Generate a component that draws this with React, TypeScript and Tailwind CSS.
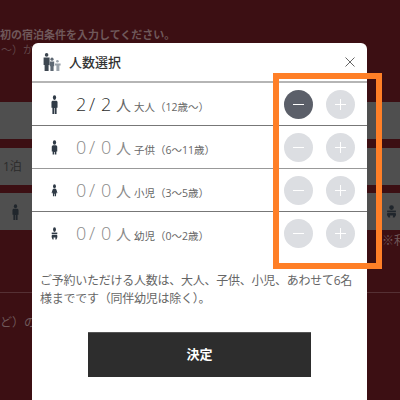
import React from "react";

const jp = "font-['Open_Sans','Noto_Sans_CJK_JP',sans-serif]";

const Adult = ({ className }: { className?: string }) => (
  <svg viewBox="0 0 12 22" className={className} fill="currentColor" preserveAspectRatio="none">
    <circle cx="6" cy="3" r="2.8" />
    <path d="M2.4 6.6h7.2l1.6 1.2v7H9.6V22H6.5v-7h-1v7H2.4v-7.2H.8v-7z" />
  </svg>
);

const Child = ({ className }: { className?: string }) => (
  <svg viewBox="0 0 12 18" className={className} fill="currentColor" preserveAspectRatio="none">
    <circle cx="6" cy="3" r="2.8" />
    <path d="M3 6.3h6l1.7 1.4v6H9.2v3.8H6.6v-3h-1.2v3H2.8v-3.8H1.3v-6z" />
  </svg>
);

const Toddler = ({ className }: { className?: string }) => (
  <svg viewBox="0 0 12 15" className={className} fill="currentColor" preserveAspectRatio="none">
    <circle cx="6" cy="2.7" r="2.5" />
    <path d="M3.6 5.6h4.8l1.1 1.3 1.5 3.6-1.3.4-.9-1.7v1.6l-.2 3.4H6.5v-3h-1v3H3.4l-.2-3.4V9.2l-.9 1.7L1 10.5l1.5-3.6z" />
  </svg>
);

const Baby = ({ className }: { className?: string }) => (
  <svg viewBox="0 0 12 14" className={className} fill="currentColor" preserveAspectRatio="none">
    <circle cx="6" cy="2.8" r="2.5" />
    <path d="M1.2 6h9.6v1.6H1.2z" />
    <path d="M1.5 8.4h9l.5 2.4-1.7 2.7H7.4l.3-2.2H4.3l.3 2.2H2.7L1 10.8z" />
  </svg>
);

const Family = () => (
  <svg viewBox="0 0 18 18" className="h-[18px] w-[18px]">
    <circle cx="3.6" cy="1.9" r="1.8" fill="#3d4650" />
    <path d="M.6 4.6h6v7.4h-1v6H1.6v-6h-1z" fill="#3d4650" />
    <circle cx="9" cy="6.2" r="1.6" fill="#5e6873" />
    <path d="M6.8 8.6h4.4v4.6h-.6V18H7.4v-4.8h-.6z" fill="#5e6873" />
    <circle cx="14.4" cy="8.2" r="1.3" fill="#9aa2aa" />
    <path d="M12 10.4h5.6v2h-1.2V18h-3v-5.6H12z" fill="#9aa2aa" />
  </svg>
);

const Row = ({
  icon,
  count,
  label,
  age,
  active,
  line,
}: {
  icon: React.ReactNode;
  count: number;
  label: string;
  age: string;
  active?: boolean;
  line: string;
}) => (
  <div className={`flex h-[43px] items-center border-b ${line}`}>
    <div className="flex w-11 justify-center text-[#2f3a46]">{icon}</div>
    <div className={`flex items-baseline ${active ? "text-[#2c2c2c]" : "text-[#8a8a8a]"}`}>
      <span className="w-[13px] text-[18px] font-light">{count}</span>
      <span className="w-[12px] text-[18px] font-light">/</span>
      <span className="w-[15px] text-[18px] font-light">{count}</span>
      <span className={`w-[18px] text-[15px] ${active ? "text-[#666666]" : ""}`}>人</span>
      <span className="text-[10.5px] text-[#666666]">
        {label}（{age}）
      </span>
    </div>
    <div className="ml-auto mr-[12px] flex gap-[13px]">
      <div
        className={`flex h-[29px] w-[29px] items-center justify-center rounded-full ${active ? "bg-[#5b5f69]" : "bg-[#dcdee2]"}`}
      >
        <div className="h-[1px] w-[11px] bg-white" />
      </div>
      <div className="relative flex h-[29px] w-[29px] items-center justify-center rounded-full bg-[#dcdee2]">
        <div className="h-[1px] w-[11px] bg-white" />
        <div className="absolute h-[11px] w-[1px] bg-white" />
      </div>
    </div>
  </div>
);

export default function App() {
  return (
    <div className={`relative h-[400px] w-[400px] overflow-hidden bg-[#3c0f13] ${jp}`}>
      {/* dimmed page behind the modal */}
      <div className="whitespace-nowrap pr-[248px] pt-[27px] text-right text-[11px] font-bold leading-[15px] text-[#6f585a]">
        初の宿泊条件を入力してください。
      </div>
      <div className="pl-[1px] text-[11px] leading-[15px] text-[#604548]">〜）から</div>
      <div className="mt-[45px] h-[37px] bg-[#4f4f4f]" />
      <div className="mt-[9px] flex h-[37px] items-center bg-[#4f4f4f] pl-[3px] text-[12px] text-[#2b2b2b]">
        1泊
      </div>
      <div className="mt-[8px] flex h-[37px] items-center justify-between bg-[#4f4f4f] pl-[12px] pr-[3px] text-[#20262c]">
        <Adult className="h-[16px] w-[7px]" />
        <Baby className="h-[13px] w-[11px]" />
      </div>
      <div className="whitespace-nowrap pl-[382px] pt-[2px] text-[12px] text-[#6f585a]">※利</div>
      <div className="mt-[42px] border-t border-[#553034]" />
      <div className="pt-[21px] text-[12px] text-[#6f585a]">ど）の ス</div>

      {/* modal */}
      <div className="absolute left-[32px] top-[43px] h-[357px] w-[335px] rounded-t-md bg-white">
        <div className="flex h-[40px] items-center border-b-2 border-[#b5b5b5] pl-[11px] pr-[12px]">
          <Family />
          <span className="ml-[8px] pt-[1px] text-[13px] font-medium text-[#333333]">人数選択</span>
          <svg viewBox="0 0 10 10" className="ml-auto h-[10px] w-[10px]" stroke="#666666" strokeWidth="1" fill="none">
            <path d="M.5.5l9 9M9.5.5l-9 9" />
          </svg>
        </div>
        <Row icon={<Adult className="h-[19px] w-[7px]" />} count={2} label="大人" age="12歳〜" active line="border-[#777777]" />
        <Row icon={<Child className="h-[15px] w-[7px]" />} count={0} label="子供" age="6〜11歳" line="border-[#999999]" />
        <Row icon={<Toddler className="h-[13px] w-[7px]" />} count={0} label="小児" age="3〜5歳" line="border-[#777777]" />
        <Row icon={<Baby className="h-[13px] w-[7px]" />} count={0} label="幼児" age="0〜2歳" line="border-transparent" />
        <p className="mt-[17px] px-[8px] text-[12px] leading-[18px] tracking-[-0.25px] text-[#666666]">
          ご予約いただける人数は、大人、子供、小児、あわせて6名様までです（同伴幼児は除く）。
        </p>
        <button className="mx-[56px] mt-[24px] flex h-[45px] w-[223px] items-center justify-center border-t border-[#555555] bg-[#2d2d2d] text-[13px] font-bold text-white">
          決定
        </button>
      </div>

      {/* orange highlight */}
      <div className="absolute left-[273px] top-[73px] h-[196px] w-[109px] border-[6px] border-[#ff7f27]" />
    </div>
  );
}
